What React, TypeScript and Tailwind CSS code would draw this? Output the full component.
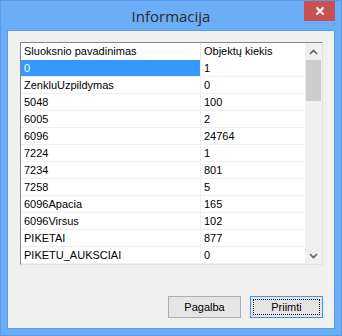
import React from "react";

const rows: [string, string][] = [
  ["0", "1"],
  ["ZenkluUzpildymas", "0"],
  ["5048", "100"],
  ["6005", "2"],
  ["6096", "24764"],
  ["7224", "1"],
  ["7234", "801"],
  ["7258", "5"],
  ["6096Apacia", "165"],
  ["6096Virsus", "102"],
  ["PIKETAI", "877"],
  ["PIKETU_AUKSCIAI", "0"],
];

export default function App() {
  return (
    <div className="w-[342px] h-[336px] bg-[#6badf6] flex flex-col relative border border-[#5a9be6]">
      <div className="h-[29px] flex items-center justify-center text-[15px] text-[#2b2b2b] font-['Open_Sans',sans-serif] pt-[1px]">
        Informacija
      </div>
      <div className="absolute top-0 right-[6px] w-[31px] h-[20px] bg-[#c75050] flex items-center justify-center">
        <svg width="10" height="10" viewBox="0 0 10 10">
          <path d="M1.5 1.5 L8.5 8.5 M8.5 1.5 L1.5 8.5" stroke="#fff" strokeWidth="2" />
        </svg>
      </div>
      <div className="mx-[6px] mb-[6px] flex-1 bg-[#f0f0f0] border border-[#5a9be6] flex flex-col pl-[12px] pt-[11px] font-['Liberation_Sans',Arial,sans-serif] text-[11px] text-black">
        <div className="w-[303px] h-[223px] bg-white border-l border-t border-[#828790] border-r-[#e3e3e3] border-b-[#e3e3e3] border-r border-b flex">
          <div className="flex-1 flex flex-col">
            <div className="h-[17px] flex">
              <div className="w-[180px] border-r border-[#e5e5e5] pl-[3px] flex items-center">Sluoksnio pavadinimas</div>
              <div className="flex-1 pl-[3px] flex items-center">Objektų kiekis</div>
            </div>
            {rows.map(([a, b], i) => (
              <div key={i} className="h-[17px] flex border-b border-[#f0f0f0]">
                <div
                  className={
                    i === 0
                      ? "w-[180px] border-r border-[#f0f0f0] pl-[3px] flex items-center bg-[#3399ff] text-white"
                      : "w-[180px] border-r border-[#f0f0f0] pl-[3px] flex items-center"
                  }
                >
                  {a}
                </div>
                <div className="flex-1 pl-[3px] flex items-center">{b}</div>
              </div>
            ))}
          </div>
          <div className="w-[17px] bg-[#f0f0f0] flex flex-col">
            <div className="h-[17px] flex items-center justify-center">
              <svg width="9" height="6" viewBox="0 0 9 6">
                <path d="M1 5 L4.5 1.5 L8 5" stroke="#606060" strokeWidth="1.6" fill="none" />
              </svg>
            </div>
            <div className="mx-[1px] h-[41px] bg-[#cdcdcd]" />
            <div className="flex-1" />
            <div className="h-[17px] flex items-center justify-center">
              <svg width="9" height="6" viewBox="0 0 9 6">
                <path d="M1 1 L4.5 4.5 L8 1" stroke="#606060" strokeWidth="1.6" fill="none" />
              </svg>
            </div>
          </div>
        </div>
        <div className="flex justify-end gap-[9px] mt-[31px] w-[303px]">
          <div className="w-[73px] h-[22px] border border-[#adadad] bg-[#e5e5e5] flex items-center justify-center">Pagalba</div>
          <div className="w-[73px] h-[22px] border border-[#3399ff] bg-[#e5e5e5] p-[2px]">
            <div className="w-full h-full border border-dotted border-black flex items-center justify-center">Priimti</div>
          </div>
        </div>
      </div>
    </div>
  );
}
